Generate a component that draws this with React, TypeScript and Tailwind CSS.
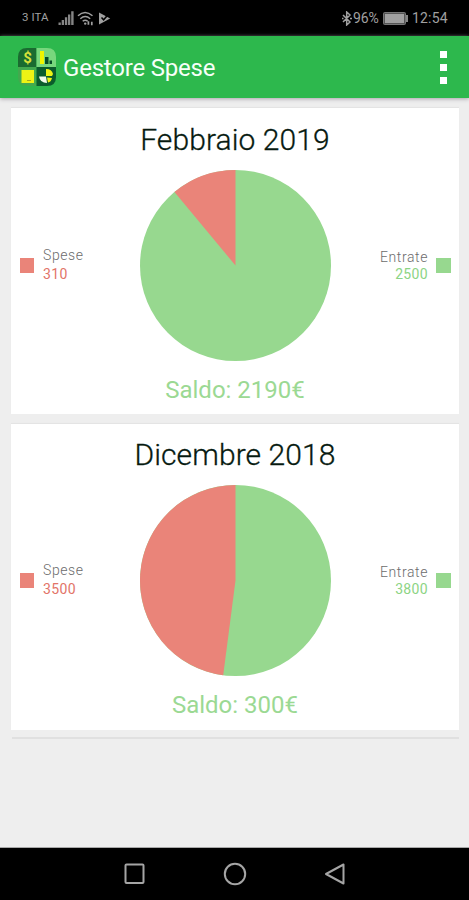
import React from "react";

type Month = { title: string; spese: number; entrate: number };

const MONTHS: Month[] = [
  { title: "Febbraio 2019", spese: 310, entrate: 2500 },
  { title: "Dicembre 2018", spese: 3500, entrate: 3800 },
];

function Pie({ spese, entrate }: { spese: number; entrate: number }) {
  const r = 95.5;
  const share = spese / (spese + entrate);
  const angle = share * 2 * Math.PI;
  const x = r - r * Math.sin(angle);
  const y = r - r * Math.cos(angle);
  return (
    <svg className="h-[191px] w-[191px]" viewBox="0 0 191 191">
      <circle cx={r} cy={r} r={r} fill="#97d88f" />
      <path d={`M${r} ${r} L${r} 0 A${r} ${r} 0 ${share > 0.5 ? 1 : 0} 0 ${x} ${y} Z`} fill="#ea8479" />
    </svg>
  );
}

function MonthCard({ title, spese, entrate }: Month) {
  return (
    <section className="h-[306px] bg-white pt-[2px] shadow-[0_-1px_1px_#e4e4e4] even:pt-px">
      <h2 className="text-center text-[30px] font-light leading-[60px] tracking-[0.1px] text-[#071a10] [-webkit-text-stroke:0.3px_#071a10]">{title}</h2>
      <div className="grid grid-cols-[1fr_191px_1fr] items-center">
        <div className="flex items-center pl-[9px]">
          <span className="h-[15px] w-[14px] bg-[#ea8479]" />
          <div className="ml-[9px] pb-[2px] text-[14px] leading-[19px]">
            <div className="font-light tracking-[0.6px] text-[#6c6c6c]">Spese</div>
            <div className="tracking-[0.35px] text-[#e27468]">{spese}</div>
          </div>
        </div>
        <Pie spese={spese} entrate={entrate} />
        <div className="flex items-center justify-end pr-[8px]">
          <div className="mr-[8px] pt-px text-right text-[14px] leading-[17px]">
            <div className="font-light tracking-[0.6px] text-[#6c6c6c]">Entrate</div>
            <div className="tracking-[0.35px] text-[#8cd484]">{entrate}</div>
          </div>
          <span className="h-[15px] w-[15px] bg-[#97d88f]" />
        </div>
      </div>
      <p className="pt-px text-center text-[24px] leading-[56px] text-[#9bd993]">Saldo: {entrate - spese}€</p>
    </section>
  );
}

function AppLogo() {
  return (
    <svg className="h-[38px] w-[38px]" viewBox="0 0 38 38">
      <path d="M18.5 0V19H0V9Q0 0 9 0Z" fill="#1a6b30" />
      <path d="M18.5 0H29Q38 0 38 9V19H18.5Z" fill="#78d77d" />
      <path d="M0 19H18.5V38H9Q0 38 0 29Z" fill="#43a94e" />
      <path d="M18.5 19H38V29Q38 38 29 38H18.5Z" fill="#0b5c2c" />
      <text x="9.5" y="15" textAnchor="middle" fontSize="15" fontWeight="700" fill="#d8e03a" fontFamily="Roboto">$</text>
      <rect x="22" y="3" width="4" height="13" fill="#f0f500" />
      <rect x="27" y="9" width="3.5" height="7" fill="#074d27" />
      <rect x="31.5" y="12.5" width="2.5" height="3.5" fill="#074d27" />
      <rect x="3.5" y="22" width="12.5" height="13" fill="#edf315" />
      <path d="M9 32.5H13" stroke="#a8a91d" strokeWidth="1" />
      <path d="M28 28V21A7 6.5 0 0 1 35 26L34 28Z" fill="#edf315" />
      <path d="M21 28.5H28L29 35Q22 35 21 28.5Z" fill="#f2fbea" />
      <path d="M29 29.5L34 30Q33 34 30 34.5Z" fill="#edf315" />
    </svg>
  );
}

function StatusBar() {
  return (
    <header className="flex h-9 items-center bg-black pl-[22px] pr-[21px] text-[#a0a0a0]">
      <span className="w-[36px] whitespace-nowrap text-[11.5px] tracking-[0.1px]">3 ITA</span>
      <svg className="h-[14px] w-[16px]" viewBox="0 0 16 14" fill="#858585">
        <path d="M.5 11.5h2.3V14H.5zM3.7 9H6v5H3.7zM6.9 6.3h2.3V14H6.9zM10 3.4h2.3V14H10zM13.2.3h2.4V14h-2.4z" />
      </svg>
      <svg className="ml-[3px] h-[15px] w-[17px]" viewBox="0 0 17 15" fill="none" stroke="#a0a0a0" strokeWidth="1.5">
        <path d="M1 4.8Q8 -1.8 15.5 4.8M3.3 7.7Q8.2 3.4 13.2 7.7M5.7 10.3Q8.2 8.2 10.7 10.3" />
        <circle cx="8.2" cy="12.6" r="1.2" fill="#a0a0a0" stroke="none" />
        <path d="M11.4 10.2v3.6M14.8 10.7v3.6" strokeWidth="1.7" />
      </svg>
      <svg className="ml-[5px] h-[13px] w-[12px]" viewBox="0 0 12 13">
        <path d="M0 .5L11.2 6.5L0 12.5Z" fill="#a0a0a0" />
        <path d="M2.5 5.5L4.6 7.8L9 2.7" fill="none" stroke="#000" strokeWidth="1.5" />
      </svg>
      <svg className="ml-auto h-[15px] w-[10px]" viewBox="0 0 10 15" fill="none" stroke="#a0a0a0" strokeWidth="1.5">
        <path d="M1 4L8 11L4.7 14V1L8 4L1 11M0 7.5H1.5M8 7.5H10" />
      </svg>
      <span className="ml-px w-[30px] whitespace-nowrap text-[14px]">96%</span>
      <svg className="h-[13px] w-[26px]" viewBox="0 0 26 13">
        <rect x=".5" y=".5" width="22" height="12" rx="1" fill="#555" stroke="#777" />
        <rect x="2" y="2" width="19" height="9" fill="#a0a0a0" />
        <rect x="23" y="3" width="2" height="7" fill="#858585" />
      </svg>
      <span className="ml-[3px] text-[14px] tracking-[0.25px]">12:54</span>
    </header>
  );
}

export default function App() {
  return (
    <div className="flex h-[900px] w-[469px] flex-col overflow-hidden bg-[#eeeeee] font-['Roboto',sans-serif]">
      <StatusBar />
      <div className="flex h-[62px] shrink-0 items-center bg-[#2db84d] pl-[18px] pr-[22px] shadow-[0_1px_4px_#a9a3ab]">
        <AppLogo />
        <h1 className="ml-[7px] pt-[2px] text-[24px] tracking-[-0.2px] text-[#f7fff8]">Gestore Spese</h1>
        <div className="ml-auto flex flex-col gap-[6px] pt-px">
          <span className="h-[7px] w-[7px] bg-white" />
          <span className="h-[7px] w-[7px] bg-white" />
          <span className="h-[7px] w-[7px] bg-white" />
        </div>
      </div>
      <main className="flex flex-1 flex-col gap-[10px] pl-[11px] pr-[10px] pt-[10px]">
        {MONTHS.map((m) => (
          <MonthCard key={m.title} {...m} />
        ))}
        <div className="-mt-[3px] ml-px h-[2px] bg-[#e0e0e0]" />
      </main>
      <nav className="flex h-[53px] shrink-0 justify-center gap-[76px] border-t border-[#a8a8a8] bg-black pt-[14px]">
        <svg className="h-6 w-6" viewBox="0 0 24 24" fill="none" stroke="#a5a5a5" strokeWidth="2">
          <rect x="2.5" y="2.5" width="18" height="18.5" rx="1" />
        </svg>
        <svg className="h-6 w-6" viewBox="0 0 24 24" fill="none" stroke="#a5a5a5" strokeWidth="2">
          <circle cx="12" cy="12" r="10.2" />
        </svg>
        <svg className="h-6 w-6" viewBox="0 0 24 24" fill="none" stroke="#a5a5a5" strokeWidth="2" strokeLinejoin="round">
          <path d="M20.5 2.5V21.5L3 12Z" />
        </svg>
      </nav>
    </div>
  );
}
